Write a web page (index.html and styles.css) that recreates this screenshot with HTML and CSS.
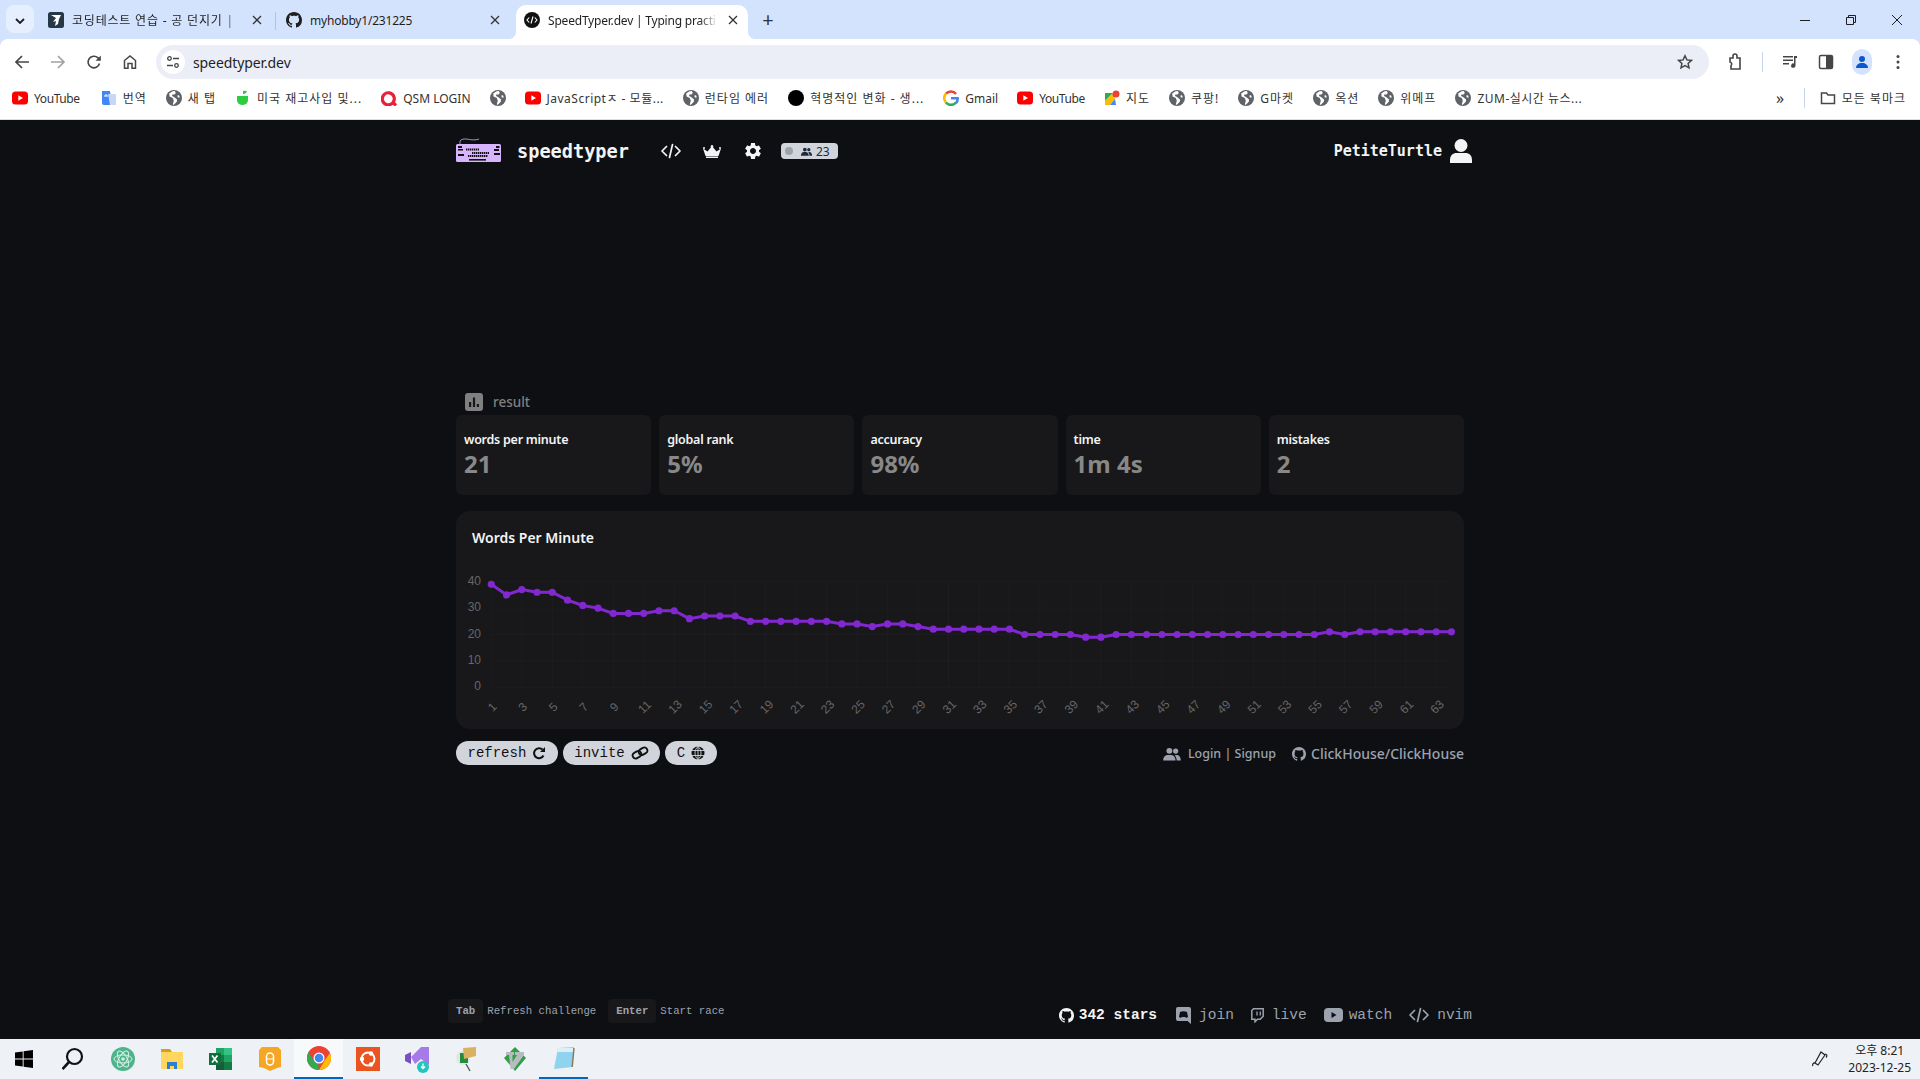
FILE: index.html
```html
<!DOCTYPE html>
<html lang="ko">
<head>
  <meta charset="UTF-8">
  <title>SpeedTyper.dev | Typing practice for programmers</title>
  <link rel="stylesheet" href="styles.css">
</head>
<body>
  <svg class="sprites" width="0" height="0">
    <symbol id="i-github" viewBox="0 0 16 16"><path fill="currentColor" d="M8 0C3.58 0 0 3.58 0 8c0 3.54 2.29 6.53 5.47 7.59.4.07.55-.17.55-.38 0-.19-.01-.82-.01-1.49-2.01.37-2.53-.49-2.69-.94-.09-.23-.48-.94-.82-1.13-.28-.15-.68-.52-.01-.53.63-.01 1.08.58 1.23.82.72 1.21 1.87.87 2.33.66.07-.52.28-.87.51-1.07-1.78-.2-3.64-.89-3.64-3.95 0-.87.31-1.59.82-2.15-.08-.2-.36-1.02.08-2.12 0 0 .67-.21 2.2.82.64-.18 1.32-.27 2-.27s1.36.09 2 .27c1.53-1.04 2.2-.82 2.2-.82.44 1.1.16 1.92.08 2.12.51.56.82 1.27.82 2.15 0 3.07-1.87 3.75-3.65 3.95.29.25.54.73.54 1.48 0 1.07-.01 1.93-.01 2.2 0 .21.15.46.55.38A8.013 8.013 0 0016 8c0-4.42-3.58-8-8-8z"/></symbol>
    <symbol id="i-gear" viewBox="0 0 24 24"><path fill="currentColor" d="M19.14 12.94c.04-.3.06-.61.06-.94 0-.32-.02-.64-.07-.94l2.03-1.58c.18-.14.23-.41.12-.61l-1.92-3.32c-.12-.22-.37-.29-.59-.22l-2.39.96c-.5-.38-1.03-.7-1.62-.94l-.36-2.54c-.04-.24-.24-.41-.48-.41h-3.84c-.24 0-.43.17-.47.41l-.36 2.54c-.59.24-1.13.57-1.62.94l-2.39-.96c-.22-.08-.47 0-.59.22L2.74 8.87c-.12.21-.08.47.12.61l2.03 1.58c-.05.3-.09.63-.09.94s.02.64.07.94l-2.03 1.58c-.18.14-.23.41-.12.61l1.92 3.32c.12.22.37.29.59.22l2.39-.96c.5.38 1.03.7 1.62.94l.36 2.54c.05.24.24.41.48.41h3.84c.24 0 .44-.17.47-.41l.36-2.54c.59-.24 1.13-.56 1.62-.94l2.39.96c.22.08.47 0 .59-.22l1.92-3.32c.12-.22.07-.47-.12-.61l-2.01-1.58zM12 15.6c-1.98 0-3.6-1.62-3.6-3.6s1.62-3.6 3.6-3.6 3.6 1.62 3.6 3.6-1.62 3.6-3.6 3.6z"/></symbol>
    <symbol id="i-code" viewBox="0 0 20 16"><path fill="none" stroke="currentColor" stroke-width="1.7" stroke-linecap="round" stroke-linejoin="round" d="M5.5 3.5 1 8l4.5 4.5M14.5 3.5 19 8l-4.5 4.5M11.5 1.5l-3 13"/></symbol>
    <symbol id="i-people" viewBox="0 0 20 16"><path fill="currentColor" d="M7 1a3.4 3.4 0 1 1 0 6.8A3.4 3.4 0 0 1 7 1zM14.2 1.6a3 3 0 1 1 0 6 3 3 0 0 1 0-6zM0 15c0-3.6 2.4-6 5-6h4c2.6 0 5 2.4 5 6v.5H0zM15.400 15.500c0-2.500-.8-4.600-2.400-6.200L15.500 9c2.600 0 4.500 2.400 4.500 5.800v.7z"/></symbol>
    <symbol id="i-globe" viewBox="0 0 16 16"><circle cx="8" cy="8" r="8" fill="#5f6368"/><path fill="#fff" d="M6.600 1.200 3.200 3.500l.4 3 3.200 1.600 1 2.600-1 3.500.8.800 3.200-3.200.3-2.200L8 7 6 6l.4-1.600h2.200l1.200-1.500-1-1.800zM13 5.200l-1.700.4.500 2 2-.2z"/></symbol>
    <symbol id="i-yt" viewBox="0 0 16 16"><rect y="1.500" width="16" height="13" rx="3.500" fill="#f00"/><path fill="#fff" d="m6.300 5.200 4.700 2.800-4.700 2.800z"/></symbol>
    <symbol id="i-x" viewBox="0 0 10 10"><path fill="none" stroke="currentColor" stroke-width="1.300" d="m1 1 8 8M9 1 1 9"/></symbol>
  </svg>

  <div class="chrome">
    <div class="tabstrip">
      <button class="tab-menu"><svg width="10" height="6" viewBox="0 0 10 6"><path fill="none" stroke="#1f1f1f" stroke-width="1.800" d="m1 1 4 4 4-4"/></svg></button>
      <div class="tab tab-first">
        <svg class="fav" viewBox="0 0 16 16"><rect width="16" height="16" rx="2.500" fill="#263747"/><path fill="#fff" d="M3 3h10l-2 4-1 5-3 2 1-5-3 1 3-4z"/></svg>
        <span class="tab-title tab-fade">코딩테스트 연습 - 공 던지기 |</span>
        <svg class="tab-close"><use href="#i-x"/></svg>
      </div>
      <div class="tab">
        <svg class="fav"><use href="#i-github"/></svg>
        <span class="tab-title">myhobby1/231225</span>
        <svg class="tab-close"><use href="#i-x"/></svg>
      </div>
      <div class="tab tab-active">
        <svg class="fav" viewBox="0 0 16 16"><circle cx="8" cy="8" r="8" fill="#111"/><path fill="none" stroke="#fff" stroke-width="1.100" d="M5.200 5.500 3 8l2.200 2.500M10.800 5.500 13 8l-2.200 2.500M9 4.500 7 11.500"/></svg>
        <span class="tab-title tab-fade">SpeedTyper.dev | Typing practi</span>
        <svg class="tab-close"><use href="#i-x"/></svg>
      </div>
      <span class="tab-new">+</span>
      <div class="win-controls">
        <svg width="10" height="10" viewBox="0 0 10 10"><path stroke="#1f1f1f" d="M0 5.500h10"/></svg>
        <svg width="10" height="10" viewBox="0 0 10 10"><path fill="none" stroke="#1f1f1f" d="M.5 2.500h7v7h-7zM2.500 2.500V.5h7v7h-2"/></svg>
        <svg width="10" height="10" viewBox="0 0 10 10"><path stroke="#1f1f1f" d="m0 0 10 10M10 0 0 10"/></svg>
      </div>
    </div>

    <div class="toolbar">
      <span class="tool"><svg width="16" height="16" viewBox="0 0 16 16"><path fill="none" stroke="#444746" stroke-width="1.700" d="M15 8H2M8 2 2 8l6 6"/></svg></span>
      <span class="tool"><svg width="16" height="16" viewBox="0 0 16 16"><path fill="none" stroke="#a0a3a6" stroke-width="1.700" d="M1 8h13M8 2l6 6-6 6"/></svg></span>
      <span class="tool"><svg width="16" height="16" viewBox="0 0 16 16"><path fill="none" stroke="#444746" stroke-width="1.600" d="M13.500 9.500A5.800 5.800 0 1 1 12 3.900L14 6"/><path fill="#444746" d="M14.800 1.500v5.300H9.500z"/></svg></span>
      <span class="tool"><svg width="16" height="16" viewBox="0 0 16 16"><path fill="none" stroke="#444746" stroke-width="1.500" d="M2.500 14.200V6.500L8 2l5.500 4.500v7.700H10V9.500H6v4.700z"/></svg></span>
      <div class="omnibox">
        <span class="site-btn"><svg width="14" height="14" viewBox="0 0 14 14"><g fill="none" stroke="#444746" stroke-width="1.300"><circle cx="3.500" cy="3.500" r="1.800"/><circle cx="10.500" cy="10.500" r="1.800"/><path d="M7 3.500h6M1 10.500h6"/></g></svg></span>
        <span class="url">speedtyper.dev</span>
        <svg class="star" width="16" height="16" viewBox="0 0 16 16"><path fill="none" stroke="#444746" stroke-width="1.500" d="m8 1.800 1.900 4.100 4.500.5-3.300 3 .9 4.400L8 11.600l-4 2.200.9-4.400-3.300-3 4.500-.5z"/></svg>
      </div>
      <span class="tool"><svg width="18" height="18" viewBox="0 0 18 18"><path fill="none" stroke="#444746" stroke-width="1.600" d="M4 5h3V3a2 2 0 0 1 4 0v2h3v11H5v-3.500a2 2 0 0 0-1-3.500z"/></svg></span>
      <span class="tool-sep"></span>
      <span class="tool"><svg width="16" height="16" viewBox="0 0 16 16"><path fill="#444746" d="M1 2h10v1.600H1zM1 5.500h10v1.600H1zM1 9h6v1.600H1zM12 2h3v2h-1.500v7.500a2.200 2.200 0 1 1-1.500-2z"/></svg></span>
      <span class="tool"><svg width="16" height="16" viewBox="0 0 16 16"><rect x="1.500" y="1.500" width="13" height="13" rx="1.500" fill="none" stroke="#444746" stroke-width="1.500"/><rect x="8" y="2" width="6" height="12" fill="#444746"/></svg></span>
      <span class="tool"><span class="avatar"><svg width="14" height="14" viewBox="0 0 14 14"><circle cx="7" cy="4" r="3" fill="#0b57d0"/><path fill="#0b57d0" d="M1 13c0-3 2.500-5 6-5s6 2 6 5z"/></svg></span></span>
      <span class="tool"><svg width="4" height="16" viewBox="0 0 4 16"><g fill="#444746"><circle cx="2" cy="2.500" r="1.500"/><circle cx="2" cy="8" r="1.500"/><circle cx="2" cy="13.500" r="1.500"/></g></svg></span>
    </div>

    <div class="bookmarks">
      <span class="bm yt"><svg class="fav"><use href="#i-yt"/></svg>YouTube</span>
      <span class="bm ko"><svg class="fav" viewBox="0 0 16 16"><path fill="#4285f4" d="M1 1h8l2 14H3a2 2 0 0 1-2-2z"/><path fill="#c6d7f7" d="M7 4h7a1 1 0 0 1 1 1v10H9z"/><path stroke="#fff" d="M3 6h4M5 4v2"/></svg>번역</span>
      <span class="bm ko"><svg class="fav"><use href="#i-globe"/></svg>새 탭</span>
      <span class="bm ko"><svg class="fav" viewBox="0 0 16 16"><path fill="#2ecc40" d="M2 6h11v4a5 5 0 0 1-5 5H7a5 5 0 0 1-5-5z"/><path fill="#2ecc40" d="M8 1c2-.5 4 .5 4 .5S11 4 8 4z"/></svg>미국 재고사입 및...</span>
      <span class="bm"><svg class="fav" viewBox="0 0 16 16"><path fill="none" stroke="#e8213b" stroke-width="3.200" d="M11 13.500A6 6 0 1 1 12 12.500L15 15.500"/></svg>QSM LOGIN</span>
      <span class="bm"><svg class="fav"><use href="#i-globe"/></svg></span>
      <span class="bm mixed"><svg class="fav"><use href="#i-yt"/></svg>JavaScriptㅈ - 모듈...</span>
      <span class="bm ko"><svg class="fav"><use href="#i-globe"/></svg>런타임 에러</span>
      <span class="bm ko"><svg class="fav" viewBox="0 0 16 16"><circle cx="8" cy="8" r="8" fill="#000"/></svg>혁명적인 변화 - 생...</span>
      <span class="bm"><svg class="fav" viewBox="0 0 16 16"><path fill="none" stroke="#ea4335" stroke-width="2.600" d="M13 4a6.500 6.500 0 0 0-10-.4"/><path fill="none" stroke="#fbbc05" stroke-width="2.600" d="M3 3.500a6.500 6.500 0 0 0 0 9"/><path fill="none" stroke="#34a853" stroke-width="2.600" d="M3 12.500a6.500 6.500 0 0 0 10 0"/><path fill="none" stroke="#4285f4" stroke-width="2.600" d="M13 13c1.500-1.500 1.800-3 1.600-4.800H8"/></svg>Gmail</span>
      <span class="bm yt"><svg class="fav"><use href="#i-yt"/></svg>YouTube</span>
      <span class="bm ko"><svg class="fav" viewBox="0 0 16 16"><path fill="#34a853" d="M1 3h8L1 11z"/><path fill="#fbbc05" d="M1 11 9 3l2 6-5 6H1z"/><path fill="#4285f4" d="m6 15 5-6 1 6z"/><circle cx="12" cy="4" r="3.500" fill="#ea4335"/></svg>지도</span>
      <span class="bm ko"><svg class="fav"><use href="#i-globe"/></svg>쿠팡!</span>
      <span class="bm ko"><svg class="fav"><use href="#i-globe"/></svg>G마켓</span>
      <span class="bm ko"><svg class="fav"><use href="#i-globe"/></svg>옥션</span>
      <span class="bm ko"><svg class="fav"><use href="#i-globe"/></svg>위메프</span>
      <span class="bm mixed"><svg class="fav"><use href="#i-globe"/></svg>ZUM-실시간 뉴스...</span>
      <span class="bm-end">
        <span class="bm-more">»</span>
        <span class="tool-sep"></span>
        <span class="bm ko"><svg class="fav" viewBox="0 0 16 16"><path fill="none" stroke="#444746" stroke-width="1.500" d="M1.500 3h5l1.500 2h6.500v8.500h-13z"/></svg>모든 북마크</span>
      </span>
    </div>
  </div>

  <div class="page">
    <header class="site-header">
      <svg class="logo" viewBox="0 0 45 26">
        <path fill="none" stroke="#c9b3e8" stroke-width=".8" d="M4 8V4c1-2 4-2 6-2s8 2 13 0"/>
        <rect y="7" width="45" height="18" rx="1.500" fill="#d8b4fe"/>
        <g fill="#111">
          <rect x="2" y="9" width="4" height="2"/><rect x="40" y="9" width="3.500" height="2"/>
          <rect x="2" y="12" width="5" height="1.500"/><rect x="38" y="12" width="5" height="2"/>
          <rect x="2" y="17" width="6" height="2"/><rect x="38" y="16" width="6" height="2"/>
          <path stroke="#111" stroke-width="1.800" stroke-dasharray="1.400 .6" d="M10 12.500h13M16 16h17M12 19h20"/>
          <rect x="13" y="22" width="17" height="1.600"/>
        </g>
      </svg>
      <a class="brand">speedtyper</a>
      <svg class="nav-code"><use href="#i-code"/></svg>
      <svg class="nav-crown" viewBox="0 0 18 13"><path fill="#f3f4f6" d="M0 3.500 4.500 6.500 9 1l4.500 5.500L18 3.500 15.500 11h-13zM3 11.500h12V13H3z"/><circle cx="9" cy="1.200" r="1.200" fill="#f3f4f6"/><circle cx="1" cy="3" r="1" fill="#f3f4f6"/><circle cx="17" cy="3" r="1" fill="#f3f4f6"/></svg>
      <svg class="nav-gear"><use href="#i-gear"/></svg>
      <span class="online"><span class="online-dot"></span><svg class="online-icon"><use href="#i-people"/></svg>23</span>
      <span class="user">PetiteTurtle<svg class="user-icon" viewBox="0 0 22 24"><circle cx="11" cy="6.500" r="6.500" fill="#f3f4f6"/><path fill="#f3f4f6" d="M0 24v-3c0-4.500 3-7 6.500-7h9c3.500 0 6.500 2.500 6.500 7v3z"/></svg></span>
    </header>

    <main class="results">
      <div class="result-head">
        <svg class="result-icon" viewBox="0 0 18 18"><rect width="18" height="18" rx="3" fill="#808080"/><path fill="#18181b" d="M4 9h2.200v5H4zM7.900 4.500h2.200V14H7.900zM11.800 11H14v3h-2.200z"/></svg>
        result
      </div>
      <div class="stats">
        <div class="stat"><div class="stat-label">words per minute</div><div class="stat-value">21</div></div>
        <div class="stat"><div class="stat-label">global rank</div><div class="stat-value">5%</div></div>
        <div class="stat"><div class="stat-label">accuracy</div><div class="stat-value">98%</div></div>
        <div class="stat"><div class="stat-label">time</div><div class="stat-value">1m 4s</div></div>
        <div class="stat"><div class="stat-label">mistakes</div><div class="stat-value">2</div></div>
      </div>
      <section class="chart-card">
        <h2>Words Per Minute</h2>
        <svg id="wpmChart" class="chart" width="1008" height="159"></svg>
      </section>
      <div class="actions">
        <button class="pill">refresh <svg viewBox="0 0 14 14"><path fill="none" stroke="#111" stroke-width="2" d="M11.500 9.500A5 5 0 1 1 10.500 3.500"/><path fill="#111" d="M13 1v5H8z"/></svg></button>
        <button class="pill">invite <svg class="pill-link" viewBox="0 0 18 14"><g fill="none" stroke="#111" stroke-width="1.800" transform="rotate(-30 9 7)"><rect x="1" y="4" width="9" height="6" rx="3"/><rect x="8" y="4" width="9" height="6" rx="3"/></g></svg></button>
        <button class="pill">C <svg viewBox="0 0 14 14"><circle cx="7" cy="7" r="6.500" fill="#111"/><path fill="none" stroke="#d1d5db" stroke-width=".9" d="M0 4.500h14M0 9.500h14M7 0v14M7 .5c-4 3-4 10 0 13M7 .5c4 3 4 10 0 13"/></svg></button>
        <span class="links">
          <a class="link-login"><svg><use href="#i-people"/></svg>Login | Signup</a>
          <a class="link-repo"><svg><use href="#i-github"/></svg>ClickHouse/ClickHouse</a>
        </span>
      </div>
    </main>

    <footer class="site-footer">
      <div class="hints">
        <kbd>Tab</kbd><span>Refresh challenge</span>
        <kbd class="kbd-enter">Enter</kbd><span>Start race</span>
      </div>
      <div class="socials">
        <a class="stars"><svg width="15" height="15"><use href="#i-github"/></svg>342 stars</a>
        <a><svg width="15" height="17" viewBox="0 0 15 17"><path fill="currentColor" d="M2 0h11a2 2 0 0 1 2 2v15l-3.500-3H2a2 2 0 0 1-2-2V2a2 2 0 0 1 2-2z"/><path fill="#0e0f12" d="M4 5c2-1 5-1 7 0l1 5-2 1-.6-1H5.600L5 11l-2-1z"/></svg>join</a>
        <a><svg width="13" height="15" viewBox="0 0 13 15"><path fill="none" stroke="currentColor" stroke-width="1.500" d="M2.500.8h9.700v7.500l-3 3H6.500l-2.500 2.500v-2.500H.8V2.500z"/><path stroke="currentColor" stroke-width="1.300" d="M6 3.500v4M9.300 3.500v4"/></svg>live</a>
        <a class="watch"><svg width="19" height="14" viewBox="0 0 19 14"><rect width="19" height="14" rx="4" fill="currentColor"/><path fill="#0e0f12" d="m7.500 4 5 3-5 3z"/></svg>watch</a>
        <a><svg width="20" height="16"><use href="#i-code"/></svg>nvim</a>
      </div>
    </footer>
  </div>

  <div class="taskbar">
    <span class="tb"><svg width="20" height="20" viewBox="0 0 20 20"><path d="M0 3.500 7.700 2.400v7H0zM8.600 2.300 18 1v8.400H8.600zM0 10.400h7.700v7.100L0 16.500zM8.600 10.400H18V19l-9.400-1.300z"/></svg></span>
    <span class="tb"><svg width="24" height="24" viewBox="0 0 24 24"><circle cx="12.500" cy="9.500" r="7.500" fill="none" stroke="#111" stroke-width="2.200"/><path stroke="#111" stroke-width="2.600" d="M7 15 .5 22"/></svg></span>
    <span class="tb"><svg width="24" height="24" viewBox="0 0 24 24"><circle cx="12" cy="12" r="12" fill="#4fb48c"/><g fill="none" stroke="#d6f0e4" stroke-width="1"><ellipse cx="12" cy="12" rx="9" ry="4"/><ellipse cx="12" cy="12" rx="9" ry="4" transform="rotate(60 12 12)"/><ellipse cx="12" cy="12" rx="9" ry="4" transform="rotate(120 12 12)"/></g><circle cx="12" cy="12" r="1.800" fill="#d6f0e4"/></svg></span>
    <span class="tb"><svg width="24" height="24" viewBox="0 0 24 24"><path fill="#d99e1c" d="M1 2h9l2 3H1z"/><path fill="#ffd75e" d="M1 5h22v17H1z"/><path fill="#2a7fd5" d="M7 22v-7h10v7h-3v-3h-4v3z"/></svg></span>
    <span class="tb"><svg width="24" height="24" viewBox="0 0 24 24"><path fill="#21a366" d="M7 1h16v22H7z"/><path fill="#33c481" d="M15 1h8v7h-8z"/><path fill="#107c41" d="M7 8h8v7H7zM15 15h8v8h-8z"/><path fill="#185c37" d="M7 15h8v8H7z"/><rect y="6" width="12" height="12" fill="#0f6e3c"/><path stroke="#fff" stroke-width="1.700" d="m3 8.500 5.500 7M8.500 8.500 3 15.500"/></svg></span>
    <span class="tb"><svg width="22" height="24" viewBox="0 0 22 24"><path fill="#f5a623" d="M3 0h16l3 3v17l-4 1-7 3-6-3-5-1V3z"/><rect x="7.500" y="6" width="7" height="12" rx="3.500" fill="none" stroke="#fff" stroke-width="1.500"/><path stroke="#fff" d="M8 12h6"/></svg></span>
    <span class="tb tb-active"><svg width="24" height="24" viewBox="0 0 24 24"><circle cx="12" cy="12" r="12" fill="#ea4335"/><path fill="#34a853" d="M12 24A12 12 0 0 1 1.600 6L7 15l4 1z"/><path fill="#fbbc05" d="M23 7a12 12 0 0 1-11 17l6-10z"/><circle cx="12" cy="12" r="5.500" fill="#fff"/><circle cx="12" cy="12" r="4.300" fill="#4285f4"/></svg></span>
    <span class="tb"><svg width="24" height="24" viewBox="0 0 24 24"><rect width="24" height="24" fill="#e95420"/><circle cx="12" cy="12" r="6.500" fill="none" stroke="#fff" stroke-width="2"/><circle cx="6" cy="12" r="2.200" fill="#fff"/><circle cx="15" cy="6.500" r="2.200" fill="#fff"/><circle cx="15" cy="17.500" r="2.200" fill="#fff"/></svg></span>
    <span class="tb"><svg width="24" height="28" viewBox="0 0 24 28"><path fill="#7b4fc4" d="M0 10 6 7v12l-6-3z"/><path fill="#a67be8" d="M6 12 16 2h8v18l-8-6-6 5z"/><circle cx="18" cy="22" r="6" fill="#22c5c0"/><path fill="none" stroke="#fff" stroke-width="1.300" d="M18 18.500v5M16 21.500l2 2 2-2"/></svg></span>
    <span class="tb"><svg width="24" height="26" viewBox="0 0 24 26"><circle cx="9" cy="12" r="7" fill="#e4e4e4"/><path fill="#1f8f3a" d="M6 7h8v10H6z"/><path fill="#d8b260" d="M9 2l13-1v9L10 13z"/><path stroke="#555" stroke-width="1.400" d="m12 18 4 7"/></svg></span>
    <span class="tb"><svg width="24" height="24" viewBox="0 0 24 24"><path fill="#2f9e44" d="M12 0l11 11-11 13L1 11z"/><path fill="#b8bcc0" d="M3 5h8v3H9.500v7L14 8h-2V5h9v3l-10 14H7.500L6 8H3z"/></svg></span>
    <span class="tb tb-note"><svg width="24" height="24" viewBox="0 0 24 24"><path fill="#8fd3ee" d="M6 2 22 1l-2 20L2 23z"/><path fill="#dceff7" d="M6 2h16l-.5 4H5z"/><path stroke="#8a7a5c" stroke-width="1.500" d="M22 2l-1.800 19"/></svg></span>
    <span class="tray">
      <svg width="20" height="20" viewBox="0 0 20 20"><g fill="none" stroke="#222" stroke-width="1.200"><path d="M11 3l4 3-7 10-3-2z"/><path d="M15 5c2 0 2.500 2 1 3.500M5 14c-2-.5-3 2-2 3"/></g></svg>
      <span class="clock"><span>오후 8:21</span><span>2023-12-25</span></span>
    </span>
  </div>

  <script src="chart.js"></script>
</body>
</html>
```

FILE: styles.css
```css
* {
  box-sizing: border-box;
}

body {
  margin: 0;
  height: 1079px;
  overflow: hidden;
  display: flex;
  flex-direction: column;
  background: #0e0f12;
  font-family: "Noto Sans", "Noto Sans CJK KR", sans-serif;
  color: #1f1f1f;
}

.sprites {
  display: none;
}

svg {
  flex: none;
}

/* browser chrome */
.chrome {
  background: #d3e3fd;
}

.tabstrip {
  height: 39px;
  display: flex;
  align-items: flex-end;
  font-size: 12px;
}

.tab-menu {
  width: 28px;
  height: 28px;
  margin: 0 6px 6px 6px;
  border: none;
  border-radius: 8px;
  background: #e6effe;
}

.tab {
  width: 238px;
  height: 34px;
  padding: 0 16px 4px 8px;
  display: flex;
  align-items: center;
  gap: 8px;
  position: relative;
}

.tab-first::after {
  content: "";
  position: absolute;
  right: 2px;
  top: 7px;
  height: 18px;
  border-right: 1px solid #a8c3ee;
}

.tab-active {
  width: 232px;
  margin-right: 6px;
  background: #fff;
  border-radius: 10px 10px 0 0;
  padding-right: 10px;
}

.tab-active::before,
.tab-active::after {
  content: "";
  position: absolute;
  bottom: 0;
  width: 8px;
  height: 8px;
}

.tab-active::before {
  left: -8px;
  background: radial-gradient(circle at 0 0, transparent 8px, #fff 8.5px);
}

.tab-active::after {
  right: -8px;
  background: radial-gradient(circle at 100% 0, transparent 8px, #fff 8.5px);
}

.tab-title {
  flex: 1;
  min-width: 0;
  white-space: nowrap;
  letter-spacing: -0.2px;
}

.tab-first .tab-title {
  letter-spacing: 0.8px;
}

.tab-fade {
  -webkit-mask-image: linear-gradient(to right, #000 88%, transparent 99%);
  mask-image: linear-gradient(to right, #000 88%, transparent 99%);
}

.tab-close {
  width: 10px;
  height: 10px;
  color: #333;
}

.tab-new {
  width: 20px;
  margin: 0 0 7px 4px;
  font-size: 20px;
  line-height: 24px;
  text-align: center;
  color: #333;
}

.win-controls {
  margin-left: auto;
  align-self: center;
  display: flex;
  gap: 36px;
  padding-right: 18px;
}

.fav {
  width: 16px;
  height: 16px;
}

.toolbar {
  height: 40px;
  padding: 6px 4px 0;
  background: #fff;
  border-radius: 8px 8px 0 0;
  display: flex;
  align-items: center;
}

.tool {
  width: 36px;
  height: 34px;
  display: flex;
  align-items: center;
  justify-content: center;
}

.tool-sep {
  width: 1px;
  height: 20px;
  margin: 0 9px;
  background: #c7d3ea;
}

.omnibox {
  flex: 1;
  height: 34px;
  margin: 0 8px;
  padding: 0 16px 0 5px;
  background: #ebeef7;
  border-radius: 17px;
  display: flex;
  align-items: center;
}

.site-btn {
  width: 24px;
  height: 24px;
  border-radius: 50%;
  background: #fff;
  display: flex;
  align-items: center;
  justify-content: center;
}

.url {
  margin-left: 8px;
  flex: 1;
  font-size: 14px;
  letter-spacing: -0.1px;
}

.avatar {
  width: 20px;
  height: 26px;
  border-radius: 10px;
  background: #d3e3fd;
  display: flex;
  align-items: center;
  justify-content: center;
}

.bookmarks {
  height: 41px;
  padding: 0 4.500px 2px 2.500px;
  background: #fff;
  border-bottom: 1px solid #dcdfe3;
  display: flex;
  align-items: center;
  font-size: 12px;
  color: #333;
  white-space: nowrap;
}

.bm {
  padding: 0 9.500px;
  display: flex;
  align-items: center;
  gap: 6px;
}

.bm.ko {
  letter-spacing: 1px;
}

.bm.yt {
  letter-spacing: -0.4px;
}

.bm.yt:first-child {
  margin-right: 2px;
}

.bm.mixed {
  letter-spacing: 0.5px;
}

.bm-end {
  margin-left: auto;
  display: flex;
  align-items: center;
}

.bm-end .tool-sep {
  margin: 0 5px 0 14px;
}

.bm-more {
  font-size: 16px;
  margin-right: 6px;
}

/* site */
.page {
  flex: 1;
  width: 1024px;
  margin: 0 auto;
  display: flex;
  flex-direction: column;
  color: #9ca3af;
}

.site-header {
  height: 62px;
  padding-left: 8px;
  display: flex;
  align-items: center;
  color: #f3f4f6;
}

.logo {
  width: 45px;
  height: 26px;
  margin-top: -3px;
}

.brand {
  margin-left: 16px;
  width: 112px;
  font-family: "DejaVu Sans Mono", monospace;
  font-size: 18.6px;
  font-weight: 700;
  color: #f3f4f6;
}

.nav-code {
  width: 20px;
  height: 16px;
  margin-left: 32px;
}

.nav-crown {
  width: 18px;
  height: 13px;
  margin-left: 22px;
}

.nav-gear {
  width: 20px;
  height: 20px;
  margin-left: 22px;
}

.online {
  width: 57px;
  height: 16px;
  margin-left: 18px;
  padding-left: 4px;
  background: #d1d5db;
  border-radius: 4px;
  display: flex;
  align-items: center;
  font-size: 12px;
  color: #1f2937;
}

.online-dot {
  width: 8px;
  height: 8px;
  border-radius: 50%;
  background: #9ca3af;
}

.online-icon {
  width: 11px;
  height: 9px;
  margin: 0 4px 0 8px;
}

.user {
  margin-left: auto;
  display: flex;
  align-items: center;
  gap: 8px;
  font-family: "DejaVu Sans Mono", monospace;
  font-size: 15px;
  font-weight: 700;
  color: #f3f4f6;
}

.user-icon {
  width: 22px;
  height: 24px;
}

.results {
  margin-top: 207px;
  padding: 0 8px;
}

.result-head {
  height: 26px;
  padding-left: 9px;
  display: flex;
  align-items: center;
  gap: 10px;
  font-size: 13.500px;
  font-weight: 500;
  color: #808080;
}

.result-icon {
  width: 18px;
  height: 18px;
}

.stats {
  display: flex;
  gap: 8px;
}

.stat {
  flex: 1;
  height: 80px;
  padding: 15px 8px;
  background: #18181b;
  border-radius: 6px;
}

.stat-label {
  font-size: 12.500px;
  line-height: 20px;
  font-weight: 600;
  letter-spacing: -0.25px;
  color: #f3f4f6;
}

.stat-value {
  font-size: 24px;
  line-height: 28px;
  font-weight: 700;
  color: #888;
}

.chart-card {
  height: 218px;
  margin-top: 16px;
  background: #18181b;
  border-radius: 14px;
}

.chart-card h2 {
  margin: 0 0 21px;
  padding: 16px 16px 0;
  font-size: 14px;
  line-height: 22px;
  font-weight: 600;
  color: #f3f4f6;
}

.chart {
  display: block;
}

.chart text {
  font-family: "Liberation Sans", sans-serif;
  font-size: 12px;
  fill: #666;
}

.actions {
  margin-top: 12px;
  display: flex;
  align-items: center;
  gap: 5px;
}

.pill {
  height: 24px;
  padding: 0 11.500px;
  border: none;
  border-radius: 12px;
  background: #d1d5db;
  display: flex;
  align-items: center;
  gap: 6px;
  font-family: "Liberation Mono", monospace;
  font-size: 14px;
  color: #111;
}

.pill svg {
  width: 14px;
  height: 14px;
}

.pill .pill-link {
  width: 18px;
}

.links {
  margin-left: auto;
  padding-top: 1px;
  display: flex;
  align-items: center;
  gap: 16px;
  font-size: 14px;
  font-weight: 500;
}

.links a {
  display: flex;
  align-items: center;
}

.link-login {
  font-size: 12.500px;
}

.link-login svg {
  width: 18px;
  height: 14px;
  margin-right: 7px;
}

.link-repo svg {
  width: 14px;
  height: 14px;
  margin-right: 5px;
}

.site-footer {
  margin-top: auto;
  height: 40px;
  margin-bottom: 4px;
  display: flex;
  align-items: center;
  justify-content: space-between;
  font-family: "Liberation Mono", monospace;
}

.hints {
  margin-top: -8px;
  display: flex;
  align-items: center;
  font-size: 10.700px;
}

.hints kbd {
  height: 24px;
  padding: 0 8px;
  margin-right: 4px;
  background: #18181b;
  border-radius: 4px;
  display: flex;
  align-items: center;
  font-family: inherit;
  font-size: 10.700px;
  font-weight: 700;
}

.hints .kbd-enter {
  margin-left: 12px;
}

.socials {
  display: flex;
  align-items: center;
  gap: 17px;
  font-size: 14.500px;
}

.socials a {
  display: flex;
  align-items: center;
  gap: 8px;
}

.socials .stars {
  gap: 5px;
  margin-right: 2px;
  font-weight: 700;
  color: #f3f4f6;
}

.socials .watch {
  gap: 6px;
}

/* windows taskbar */
.taskbar {
  height: 40px;
  background: #eef1f6;
  display: flex;
  align-items: center;
}

.tb {
  width: 49px;
  height: 40px;
  display: flex;
  align-items: center;
  justify-content: center;
}

.tb-active {
  background: #f8f9fb;
  border-bottom: 2px solid #0067c0;
}

.tb-note {
  border-bottom: 2px solid #0067c0;
}

.tray {
  margin-left: auto;
  padding-right: 9px;
  display: flex;
  align-items: center;
  gap: 18px;
}

.clock {
  display: flex;
  flex-direction: column;
  align-items: center;
  font-size: 12px;
  line-height: 17px;
  color: #222;
}
```

FILE: chart.js
```js
const wpm = [39, 35, 37, 36, 36, 33, 31, 30, 28, 28, 28, 29, 29, 26, 27, 27, 27, 25, 25, 25, 25, 25, 25,
  24, 24, 23, 24, 24, 23, 22, 22, 22, 22, 22, 22, 20, 20, 20, 20, 19, 19, 20, 20, 20, 20, 20, 20, 20,
  20, 20, 20, 20, 20, 20, 20, 21, 20, 21, 21, 21, 21, 21, 21, 21];

const left = 35.3;
const stepX = 15.24;
const zeroY = 117.3;
const stepY = 2.64;

let grid = "";
let labels = "";

for (let v = 0; v <= 40; v += 10) {
  const y = zeroY - v * stepY;
  grid += `M${left} ${y}H${left + stepX * 63}`;
  labels += `<text x="25" y="${y + 3}" text-anchor="end">${v}</text>`;
}

for (let i = 0; i < wpm.length; i += 2) {
  const x = left + i * stepX;
  grid += `M${x} ${zeroY - 40 * stepY}V${zeroY}`;
  labels += `<text x="${x + 1}" y="141" text-anchor="middle" transform="rotate(-45 ${x + 1} 137)">${i + 1}</text>`;
}

const points = wpm.map((v, i) => [left + i * stepX, zeroY - v * stepY]);
const line = points.map(p => p.join(",")).join(" ");
const dots = points.map(p => `<circle cx="${p[0]}" cy="${p[1]}" r="3.6"/>`).join("");

document.getElementById("wpmChart").innerHTML = `
  <path d="${grid}" fill="none" stroke="#fff" stroke-opacity="0.025"/>
  ${labels}
  <polyline points="${line}" fill="none" stroke="#8228d0" stroke-width="3"/>
  <g fill="#8228d0">${dots}</g>`;
```
